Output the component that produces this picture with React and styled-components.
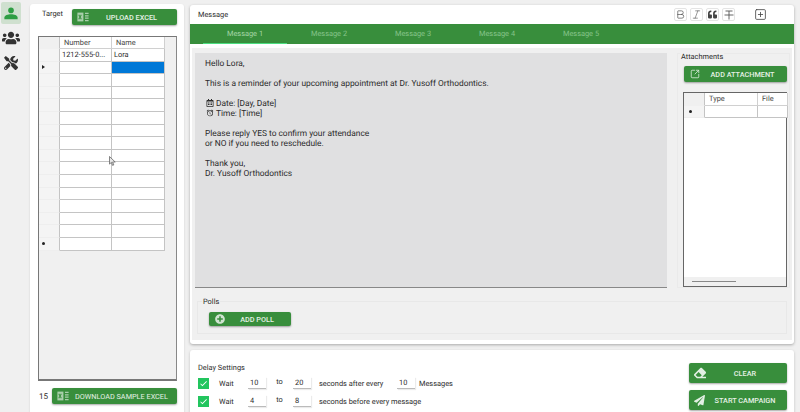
import React from 'react';
import styled, { createGlobalStyle } from 'styled-components';
import { FaUsers, FaTools, FaQuoteLeft, FaEraser, FaPaperPlane, FaPlusCircle, FaRegCalendarAlt } from 'react-icons/fa';
import { MdAlarm, MdCheck } from 'react-icons/md';
import { Bold, Italic, SquarePlus, SquareArrowOutUpRight } from 'lucide-react';

const GREEN = '#388e3c';

const GlobalStyle = createGlobalStyle`
  html, body {
    margin: 0;
    padding: 0;
    background: #f0f0f0;
  }
  * {
    box-sizing: border-box;
  }
`;

const ExcelIcon = () => (
  <svg width="12" height="10" viewBox="0 0 15 12" fill="none">
    <rect x="0.5" y="0.5" width="7.5" height="11" fill="#a9cfab" />
    <path d="M2.2 3.2l3.2 5.6M5.4 3.2L2.2 8.8" stroke={GREEN} strokeWidth="1.3" />
    <path d="M10 1.5h4.5M10 4.5h4.5M10 7.5h4.5M10 10.5h4.5" stroke="#a9cfab" strokeWidth="1.6" />
  </svg>
);

const PersonIcon = () => (
  <svg width="14" height="13" viewBox="0 0 18 16" fill="#2e9e44">
    <circle cx="9" cy="4" r="3.6" />
    <path d="M0.5 15.5v-2.2C0.5 10.5 5 9 9 9s8.500 1.500 8.500 4.300v2.200z" />
  </svg>
);

const StrikeIcon = () => (
  <svg width="10" height="10" viewBox="0 0 10 10" fill="none" stroke="#555" strokeWidth="0.9">
    <path d="M1.500 1h7M5 1v8.500M0.500 5h9" />
  </svg>
);

const Cursor = () => (
  <svg width="7" height="10" viewBox="0 0 7 10">
    <path d="M.5.5v7.600l1.900-1.700 1.200 3 1.200-.5-1.200-2.900h2.600z" fill="#e8e8e8" stroke="#555" strokeWidth=".7" />
  </svg>
);

const targetRows = Array.from({ length: 16 }, (_, i) => i);
const tabs = ['Message 1', 'Message 2', 'Message 3', 'Message 4', 'Message 5'];

const App = () => (
  <Page>
    <GlobalStyle />
    <Sidebar>
      <NavItem $active><PersonIcon /></NavItem>
      <NavItem><FaUsers size={18} color="#333" /></NavItem>
      <NavItem><FaTools size={14} color="#333" /></NavItem>
    </Sidebar>

    <TargetCard>
      <TargetHead>
        <TargetLabel>Target</TargetLabel>
        <GreenButton $w="105px" $h="16px">
          <BtnIcon><ExcelIcon /></BtnIcon>
          <BtnText>UPLOAD EXCEL</BtnText>
        </GreenButton>
      </TargetHead>
      <TargetGrid>
        <GridRow $cols="21px 52px 53px" $h="12px">
          <RowHead $header />
          <HeadCell>Number</HeadCell>
          <HeadCell>Name</HeadCell>
        </GridRow>
        {targetRows.map(i => (
          <GridRow key={i} $cols="21px 52px 53px" $h="12.6px">
            <RowHead>{i === 1 ? <Arrow /> : i === 15 ? <Star /> : null}</RowHead>
            <Cell>{i === 0 ? '1212-555-0...' : ''}</Cell>
            <Cell $selected={i === 1}>{i === 0 ? 'Lora' : ''}</Cell>
          </GridRow>
        ))}
        <MouseCursor><Cursor /></MouseCursor>
      </TargetGrid>
      <TargetFoot>
        <Count>15</Count>
        <GreenButton $w="125px" $h="16px">
          <BtnIcon><ExcelIcon /></BtnIcon>
          <BtnText $light>DOWNLOAD SAMPLE EXCEL</BtnText>
        </GreenButton>
      </TargetFoot>
    </TargetCard>

    <MainColumn>
      <MessageCard>
        <MessageHead>
          <CardTitle>Message</CardTitle>
          <Toolbar>
            <ToolBtn><Bold size={11} strokeWidth={1.4} /></ToolBtn>
            <ToolBtn><Italic size={11} strokeWidth={1.2} /></ToolBtn>
            <ToolBtn><FaQuoteLeft size={9} /></ToolBtn>
            <ToolBtn><StrikeIcon /></ToolBtn>
            <PlusBtn><SquarePlus size={13} strokeWidth={1.5} /></PlusBtn>
          </Toolbar>
        </MessageHead>
        <TabBar>
          {tabs.map((t, i) => (
            <Tab key={t} $active={i === 0}>{t}</Tab>
          ))}
        </TabBar>
        <MessageBody>
          <EditorRow>
            <Editor>
              <p>Hello Lora,</p>
              <p>This is a reminder of your upcoming appointment at Dr. Yusoff Orthodontics.</p>
              <p>
                <LineIcon><FaRegCalendarAlt size={8} /></LineIcon>Date: [Day, Date]<br />
                <LineIcon><MdAlarm size={8} /></LineIcon>Time: [Time]
              </p>
              <p>Please reply YES to confirm your attendance<br />or NO if you need to reschedule.</p>
              <p>Thank you,<br />Dr. Yusoff Orthodontics</p>
            </Editor>
            <Attachments>
              <Legend>Attachments</Legend>
              <GreenButton $w="103px" $h="16px">
                <BtnIcon><SquareArrowOutUpRight size={10} color="#d5e8d6" /></BtnIcon>
                <BtnText>ADD ATTACHMENT</BtnText>
              </GreenButton>
              <AttachGrid>
                <GridRow $cols="21px 53px 30px" $h="13px">
                  <RowHead $header />
                  <HeadCell>Type</HeadCell>
                  <HeadCell>File</HeadCell>
                </GridRow>
                <GridRow $cols="21px 53px 30px" $h="12px">
                  <RowHead $pad="5px"><Star /></RowHead>
                  <Cell />
                  <Cell />
                </GridRow>
                <AttachSpace />
                <Scrollbar><ScrollThumb /></Scrollbar>
              </AttachGrid>
            </Attachments>
          </EditorRow>
          <Polls>
            <PollLegend>Polls</PollLegend>
            <GreenButton $w="82px" $h="14px">
              <BtnIcon><FaPlusCircle size={10} color="#cfe3d0" /></BtnIcon>
              <BtnText>ADD POLL</BtnText>
            </GreenButton>
          </Polls>
        </MessageBody>
      </MessageCard>

      <DelayCard>
        <DelaySettings>
          <DelayTitle>Delay Settings</DelayTitle>
          <DelayRow>
            <Check><MdCheck size={9} color="#fff" /></Check>
            <Wait>Wait</Wait>
            <NumBox>10</NumBox>
            <To>to</To>
            <NumBox>20</NumBox>
            <After>seconds after every</After>
            <NumBox>10</NumBox>
            <Units>Messages</Units>
          </DelayRow>
          <DelayRow>
            <Check><MdCheck size={9} color="#fff" /></Check>
            <Wait>Wait</Wait>
            <NumBox>4</NumBox>
            <To>to</To>
            <NumBox>8</NumBox>
            <After>seconds before every message</After>
          </DelayRow>
        </DelaySettings>
        <DelayActions>
          <GreenButton $w="98px" $h="20px">
            <BtnIcon><FaEraser size={12} color="#e2efe3" /></BtnIcon>
            <BtnText>CLEAR</BtnText>
          </GreenButton>
          <GreenButton $w="98px" $h="20px">
            <BtnIcon><FaPaperPlane size={11} color="#e2efe3" /></BtnIcon>
            <BtnText>START CAMPAIGN</BtnText>
          </GreenButton>
        </DelayActions>
      </DelayCard>
    </MainColumn>
  </Page>
);

const Page = styled.div`
  width: 800px;
  height: 412px;
  overflow: hidden;
  display: flex;
  background: #f0f0f0;
  font-family: Roboto, 'Liberation Sans', sans-serif;
  font-size: 7.4px;
  color: #2b2b2b;
  text-rendering: geometricPrecision;
`;

const Sidebar = styled.nav`
  width: 30px;
  flex: none;
  padding: 2px 0 0 1px;
  display: flex;
  flex-direction: column;
`;

const NavItem = styled.div`
  width: 20px;
  height: 22px;
  margin-bottom: 3px;
  border-radius: 2px;
  display: flex;
  align-items: center;
  justify-content: center;
  background: ${props => (props.$active ? '#cfe0cf' : 'transparent')};
`;

const TargetCard = styled.section`
  width: 154px;
  height: 412px;
  margin-top: 4px;
  padding: 5px 7px 0 8px;
  flex: none;
  background: #fff;
  border-radius: 3px;
  box-shadow: 0 1px 2px rgba(0, 0, 0, 0.15);
  display: flex;
  flex-direction: column;
`;

const TargetHead = styled.div`
  height: 27px;
  flex: none;
  display: flex;
  align-items: flex-start;
`;

const TargetLabel = styled.span`
  width: 34px;
  padding: 0 0 0 4px;
  line-height: 10px;
`;

const TargetGrid = styled.div`
  position: relative;
  height: 345px;
  flex: none;
  border: 1px solid #777;
  border-right-color: #888;
  border-bottom-width: 2px;
  background: #f0f0f0;
`;

const GridRow = styled.div`
  display: grid;
  grid-template-columns: ${props => props.$cols};
  height: ${props => props.$h};
  flex: none;
`;

const RowHead = styled.div`
  padding-left: ${props => props.$pad || '3px'};
  background: ${props => (props.$header ? '#f0f0f0' : '#f4f4f4')};
  border-right: 1px solid #c4c4c4;
  border-bottom: 1px solid ${props => (props.$header ? 'transparent' : '#eee')};
  display: flex;
  align-items: center;
`;

const HeadCell = styled.div`
  background: #fff;
  border-right: 1px solid #d0d0d0;
  border-bottom: 1px solid #d0d0d0;
  padding-left: 4px;
  line-height: 12px;
  white-space: nowrap;
  overflow: hidden;
  color: #444;
`;

const Cell = styled.div`
  background: ${props => (props.$selected ? '#0078d7' : '#fff')};
  border-right: 1px solid #c4c4c4;
  border-bottom: 1px solid #c4c4c4;
  padding-left: 2px;
  line-height: 12px;
  white-space: nowrap;
  overflow: hidden;
`;

const Arrow = styled.span`
  width: 0;
  height: 0;
  border-left: 3px solid #222;
  border-top: 2.5px solid transparent;
  border-bottom: 2.5px solid transparent;
`;

const Star = styled.span`
  width: 3px;
  height: 3px;
  border-radius: 50%;
  background: #222;
`;

const MouseCursor = styled.div`
  position: absolute;
  left: 70px;
  top: 119px;
  line-height: 0;
`;

const TargetFoot = styled.div`
  margin-top: 7px;
  flex: none;
  display: flex;
  align-items: center;
  justify-content: space-between;
`;

const Count = styled.span`
  padding-left: 1px;
  font-size: 8px;
`;

const GreenButton = styled.button`
  width: ${props => props.$w};
  height: ${props => props.$h};
  flex: none;
  margin: 0;
  padding: 0;
  border: 0;
  border-radius: 2px;
  background: ${GREEN};
  box-shadow: 0 1px 2px rgba(0, 0, 0, 0.35);
  color: #e6f1e6;
  display: flex;
  align-items: center;
  font-family: inherit;
`;

const BtnIcon = styled.span`
  width: 21px;
  flex: none;
  display: flex;
  align-items: center;
  justify-content: center;
`;

const BtnText = styled.span`
  flex: 1;
  padding-right: 7px;
  text-align: center;
  font-size: 7.3px;
  font-weight: ${props => (props.$light ? 400 : 500)};
  white-space: nowrap;
`;

const MainColumn = styled.div`
  width: 604px;
  margin-left: 6px;
  flex: none;
  display: flex;
  flex-direction: column;
  gap: 6px;
  padding-top: 5px;
`;

const MessageCard = styled.section`
  height: 339px;
  flex: none;
  background: #fff;
  border-radius: 3px;
  box-shadow: 0 1px 3px rgba(0, 0, 0, 0.3);
  display: flex;
  flex-direction: column;
`;

const MessageHead = styled.header`
  height: 19px;
  flex: none;
  padding: 0 27px 0 8px;
  display: flex;
  align-items: center;
  justify-content: space-between;
`;

const CardTitle = styled.span`
  font-size: 7.4px;
`;

const Toolbar = styled.div`
  display: flex;
  align-items: center;
  gap: 3px;
  color: #444;
`;

const ToolBtn = styled.span`
  width: 13px;
  height: 13px;
  border: 1px solid #e4e4e4;
  border-radius: 2px;
  display: flex;
  align-items: center;
  justify-content: center;
`;

const PlusBtn = styled.span`
  width: 13px;
  height: 13px;
  margin-left: 16px;
  display: flex;
  align-items: center;
  justify-content: center;
`;

const TabBar = styled.div`
  height: 20px;
  flex: none;
  padding-left: 13px;
  background: ${GREEN};
  display: flex;
`;

const Tab = styled.div`
  width: 84px;
  height: 20px;
  text-align: center;
  font-size: 7.4px;
  line-height: 20px;
  color: ${props => (props.$active ? '#a5d6a7' : '#86c48b')};
  border-bottom: 1px solid ${props => (props.$active ? '#4ade80' : 'transparent')};
`;

const MessageBody = styled.div`
  flex: 1;
  margin: 4px 2px 4px 2px;
  padding: 5px 5px 0 3px;
  background: #f0f0f0;
  display: flex;
  flex-direction: column;
`;

const EditorRow = styled.div`
  height: 235px;
  flex: none;
  display: flex;
  gap: 10px;
`;

const Editor = styled.div`
  width: 472px;
  flex: none;
  padding: 6px 10px 0;
  background: #e0e0e1;
  border-bottom: 1px solid #888;
  font-size: 8.4px;
  line-height: 10px;

  p {
    margin: 0 0 10px;
  }
`;

const LineIcon = styled.span`
  display: inline-flex;
  width: 11px;
  padding-left: 1px;
  vertical-align: -1px;
`;

const Attachments = styled.div`
  position: relative;
  width: 113px;
  flex: none;
  padding: 12px 3px 0 6px;
  border: 1px solid #eaeaea;
  display: flex;
  flex-direction: column;
`;

const Legend = styled.span`
  position: absolute;
  left: 2px;
  top: -2px;
  padding: 0 1px;
  background: #f0f0f0;
  font-size: 7.4px;
  line-height: 10px;
`;

const AttachGrid = styled.div`
  margin: 10px 0 0 -1px;
  width: 104px;
  flex: 1;
  border: 1px solid #666;
  background: #fff;
  display: flex;
  flex-direction: column;
`;

const AttachSpace = styled.div`
  flex: 1;
`;

const Scrollbar = styled.div`
  height: 9px;
  padding: 4px 0 0 8px;
  background: #f0f0f0;
`;

const ScrollThumb = styled.div`
  width: 44px;
  height: 1px;
  background: #888;
`;

const Polls = styled.div`
  position: relative;
  margin: 13px 0 0 2px;
  height: 33px;
  padding: 10px 0 0 11px;
  border: 1px solid #e8e8e8;
`;

const PollLegend = styled(Legend)`
  left: 4px;
  top: -5px;
`;

const DelayCard = styled.section`
  height: 70px;
  flex: none;
  padding: 13px 7px 0 8px;
  background: #fff;
  border-radius: 3px;
  box-shadow: 0 1px 3px rgba(0, 0, 0, 0.2);
  display: flex;
  justify-content: space-between;
`;

const DelaySettings = styled.div`
  display: flex;
  flex-direction: column;
`;

const DelayTitle = styled.div`
  height: 11px;
  line-height: 9px;
`;

const DelayRow = styled.div`
  height: 18px;
  display: flex;
  align-items: center;
`;

const Check = styled.span`
  width: 11px;
  height: 11px;
  margin-right: 10px;
  background: #22c55e;
  display: flex;
  align-items: center;
  justify-content: center;
`;

const Wait = styled.span`
  width: 29px;
`;

const NumBox = styled.span`
  width: 18px;
  height: 12px;
  padding-left: 2px;
  line-height: 12px;
  border-bottom: 1px solid #bbb;
  box-shadow: 1px 1px 1px rgba(0, 0, 0, 0.08);
`;

const To = styled.span`
  width: 27px;
  padding-bottom: 3px;
  text-align: center;
`;

const After = styled.span`
  margin-left: 8px;
  width: 78px;
  white-space: nowrap;
`;

const Units = styled.span`
  margin-left: 4px;
`;

const DelayActions = styled.div`
  display: flex;
  flex-direction: column;
  gap: 7px;
`;

export default App;
